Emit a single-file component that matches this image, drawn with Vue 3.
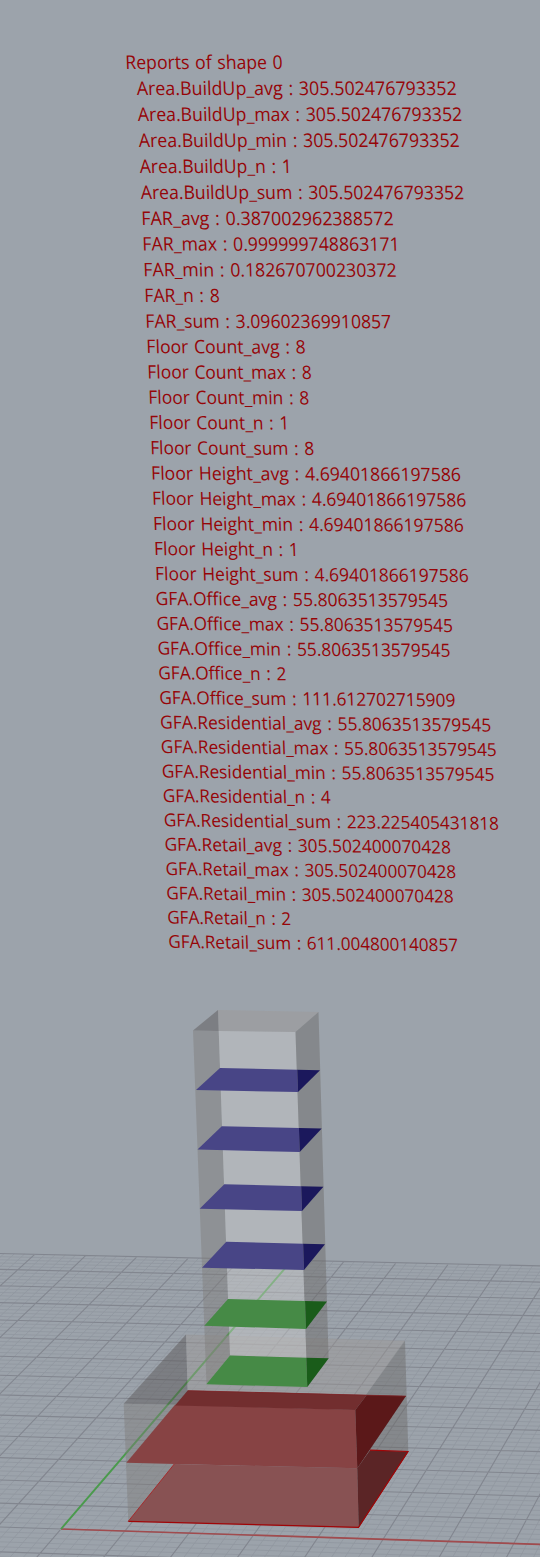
<script setup>
// Ground plane control points: grid (u, v) -> canvas (x, y)
const control = [
  [0, 0, 61, 1529],
  [6, 0, 448.3, 1541.4],
  [-5, 14, 34.7, 1254.3],
  [4, 14, 501, 1265],
]

function solveProjection(points) {
  const m = []
  for (const [u, v, x, y] of points) {
    m.push([u, v, 1, 0, 0, 0, -u * x, -v * x, x])
    m.push([0, 0, 0, u, v, 1, -u * y, -v * y, y])
  }
  for (let c = 0; c < 8; c++) {
    let p = c
    for (let r = c + 1; r < 8; r++) if (Math.abs(m[r][c]) > Math.abs(m[p][c])) p = r
    ;[m[c], m[p]] = [m[p], m[c]]
    for (let r = 0; r < 8; r++) {
      if (r === c) continue
      const f = m[r][c] / m[c][c]
      for (let k = c; k < 9; k++) m[r][k] -= f * m[c][k]
    }
  }
  return m.map((row, i) => row[8] / row[i])
}

const h = solveProjection(control)
function project(u, v) {
  const w = h[6] * u + h[7] * v + 1
  return [(h[0] * u + h[1] * v + h[2]) / w, (h[3] * u + h[4] * v + h[5]) / w]
}
function segment(a, b) {
  return 'M' + project(...a).map((n) => n.toFixed(2)).join(' ') + 'L' + project(...b).map((n) => n.toFixed(2)).join(' ')
}

let major = ''
let minor = ''
for (let i = -60; i <= 75; i++) {
  const d = segment([i / 5, -2], [i / 5, 14])
  if (i % 5 === 0) major += d
  else minor += d
}
for (let i = -10; i <= 70; i++) {
  const d = segment([-12, i / 5], [15, i / 5])
  if (i % 5 === 0) major += d
  else minor += d
}
const axisX = segment([0, 0], [15, 0])
const axisY = segment([0, 0], [0, 14])

// label, ink left, baseline, ink right
const lines = [
  ['Reports of shape 0', 126.5, 69, 282],
  ['Area.BuildUp_avg : 305.502476793352', 137, 95, 456],
  ['Area.BuildUp_max : 305.502476793352', 138, 121, 461.5],
  ['Area.BuildUp_min : 305.502476793352', 139, 147, 459],
  ['Area.BuildUp_n : 1', 140, 173, 289],
  ['Area.BuildUp_sum : 305.502476793352', 141, 199, 463.5],
  ['FAR_avg : 0.387002962388572', 142.5, 225, 393],
  ['FAR_max : 0.999999748863171', 143.5, 250.5, 397],
  ['FAR_min : 0.182670700230372', 144.5, 276.3, 396],
  ['FAR_n : 8', 145.5, 302, 219],
  ['FAR_sum : 3.09602369910857', 146.5, 327.7, 390.5],
  ['Floor Count_avg : 8', 147.5, 353.1, 305],
  ['Floor Count_max : 8', 148.5, 378.5, 311],
  ['Floor Count_min : 8', 149.5, 403.8, 308.5],
  ['Floor Count_n : 1', 150.5, 429, 286.5],
  ['Floor Count_sum : 8', 151.3, 454.3, 313.5],
  ['Floor Height_avg : 4.69401866197586', 152.2, 479.6, 460.3],
  ['Floor Height_max : 4.69401866197586', 153.2, 504.8, 465.7],
  ['Floor Height_min : 4.69401866197586', 154.2, 530.1, 463],
  ['Floor Height_n : 1', 155.2, 555.1, 296],
  ['Floor Height_sum : 4.69401866197586', 156.2, 580.1, 468],
  ['GFA.Office_avg : 55.8063513579545', 156.2, 605, 447.3],
  ['GFA.Office_max : 55.8063513579545', 157.2, 629.8, 452.3],
  ['GFA.Office_min : 55.8063513579545', 158.2, 654.6, 449.8],
  ['GFA.Office_n : 2', 159, 679.2, 285.7],
  ['GFA.Office_sum : 111.612702715909', 160, 704, 454.7],
  ['GFA.Residential_avg : 55.8063513579545', 160.8, 728.6, 490.5],
  ['GFA.Residential_max : 55.8063513579545', 161.6, 753, 496],
  ['GFA.Residential_min : 55.8063513579545', 162.5, 777.6, 493.7],
  ['GFA.Residential_n : 4', 163.4, 802, 330],
  ['GFA.Residential_sum : 223.225405431818', 164.4, 826.3, 498.3],
  ['GFA.Retail_avg : 305.502400070428', 165.2, 850.5, 450.3],
  ['GFA.Retail_max : 305.502400070428', 166.2, 874.9, 455.5],
  ['GFA.Retail_min : 305.502400070428', 167, 899.3, 453],
  ['GFA.Retail_n : 2', 168, 923.5, 290.3],
  ['GFA.Retail_sum : 611.004800140857', 169, 947.8, 457.3],
]
const bearing = { R: 0.9, A: 0, F: 0.9, G: 0.5 }
const report = lines.map(([text, x0, y, x1]) => {
  const b = bearing[text[0]]
  const tail = text.endsWith('1') ? 3 : 0.9
  const t = (y - 69) / 879
  const tilt = Math.max(0, (y - 160) / 790) * 0.0125
  return {
    text,
    size: (19 - t * 1.25).toFixed(2),
    length: (x1 - x0 + b + tail).toFixed(1),
    matrix: `matrix(1 ${tilt.toFixed(5)} 0.035 1 ${(x0 - b).toFixed(2)} ${y})`,
  }
})

// Tower plates: front-left, back-left, back-right, front-right
const plates = [
  ['office', [196, 1090], [220, 1068], [320, 1070.2], [298, 1092]],
  ['office', [197.5, 1149.5], [221.8, 1126.2], [321.7, 1128.5], [299.7, 1152]],
  ['office', [199.7, 1208.8], [224.3, 1184.2], [323.4, 1186.7], [302, 1211]],
  ['office', [202, 1267.7], [226.3, 1241.8], [325, 1244.2], [304, 1270]],
  ['housing', [204.3, 1325.8], [228, 1299], [327, 1301.4], [306, 1329]],
  ['housing', [206.3, 1384.3], [230, 1355.4], [328.7, 1358.2], [307.3, 1387]],
].map(([kind, fl, bl, br, fr]) => {
  const edgeX = fr[0] - (fr[1] - br[1]) * 0.034
  const split = [edgeX, br[1] - 0.4]
  return { kind, front: [fl, bl, split, fr].join(' '), side: [split, br, fr].join(' ') }
})
</script>

<template>
  <main class="viewport">
    <svg class="scene" width="540" height="1557" viewBox="0 0 540 1557">
      <path class="grid-minor" :d="minor" />
      <path class="grid-major" :d="major" />
      <path class="axis-x" :d="axisX" />
      <path class="axis-y" :d="axisY" />

      <!-- podium volume -->
      <g class="glass">
        <polygon class="inner" points="186,1334.5 188,1405 123.7,1403.7" />
        <polygon class="roof" points="186,1334.5 405,1340.7 355.3,1410 188,1405" />
        <polygon class="left" points="123.7,1403.7 188,1405 189.3,1446 128.3,1521.3" />
        <polygon class="right" points="355.3,1410 405,1340.7 408.3,1451.7 358.7,1527.7" />
      </g>
      <polygon class="low-front" points="128.3,1521.3 174.3,1464 357.3,1468.3 358.7,1527.7" />
      <polygon class="low-side" points="357.3,1468.3 370,1450.2 408.3,1451.7 358.7,1527.7" />
      <path class="low-edge" d="M370 1450.2L408 1451.5L358.5 1527.3L128.3 1521.3" />
      <path class="low-edge thin" d="M128.3 1521.3L174.3 1464" />
      <polygon class="mid-front" points="126.3,1462.8 175,1404.8 355.3,1409.8 357.3,1468.3" />
      <polygon class="mid-back" points="187.7,1390.4 366.7,1395 355.3,1410 175,1405.5" />
      <polygon class="mid-side" points="355.3,1410 366.7,1395 406,1396 357.3,1468.3" />
      <path class="mid-edge" d="M187.7 1390.7L406 1396.2" />

      <!-- tower volume -->
      <g class="glass">
        <polygon class="inner" points="218,1010 218.7,1031 193,1030.5" />
        <polygon class="roof" points="218,1010 318.5,1012 295.5,1032 218.7,1031" />
        <polygon class="left" points="193,1030.5 218.7,1031 230,1355.5 206.5,1384" />
        <polygon class="center" points="218.7,1031 295.5,1032 306.5,1358 230,1355.5" />
        <polygon class="right" points="295.5,1032 318.5,1012 328.6,1358.5 307.3,1386.5" />
      </g>
      <g v-for="(p, i) in plates" :key="i" :class="p.kind">
        <polygon class="plate-front" :points="p.front" />
        <polygon class="plate-side" :points="p.side" />
      </g>

      <g class="report">
        <text
          v-for="l in report"
          :key="l.text"
          :transform="l.matrix"
          :font-size="l.size"
          :textLength="l.length"
          lengthAdjust="spacingAndGlyphs"
        >{{ l.text }}</text>
      </g>
    </svg>
  </main>
</template>

<style scoped>
.viewport {
  width: 540px;
  height: 1557px;
  overflow: hidden;
  background: #9ca3ab;
}
.scene {
  display: block;
}
.grid-minor,
.grid-major,
.axis-x,
.axis-y,
.low-edge,
.mid-edge {
  fill: none;
}
.grid-minor {
  stroke: #90979f;
  stroke-width: 0.8;
}
.grid-major {
  stroke: #82868f;
  stroke-width: 1.1;
}
.axis-x {
  stroke: #a14b4e;
  stroke-width: 1.7;
}
.axis-y {
  stroke: #4a9b4c;
  stroke-width: 1.9;
}
.glass {
  fill-opacity: 0.45;
}
.inner {
  fill: #575352;
}
.roof {
  fill: #9e9a97;
}
.left {
  fill: #7f7d7a;
}
.center {
  fill: #cdcbcc;
}
.right {
  fill: #6b6966;
}
.low-front {
  fill: #885253;
}
.low-side {
  fill: #5b2526;
}
.low-edge {
  stroke: #a00507;
  stroke-width: 1.2;
}
.low-edge.thin {
  stroke: #a52b2d;
  stroke-width: 1;
}
.mid-front {
  fill: #874344;
}
.mid-back {
  fill: #722e2f;
}
.mid-side {
  fill: #5b1819;
}
.mid-edge {
  stroke: #7d2224;
  stroke-width: 0.8;
}
.office .plate-front {
  fill: #484586;
}
.office .plate-side {
  fill: #1b185c;
}
.housing .plate-front {
  fill: #468a46;
}
.housing .plate-side {
  fill: #1a5c1a;
}
.report {
  fill: #960508;
  font-family: "Open Sans", "Noto Sans", sans-serif;
  word-spacing: 1.2px;
}
</style>

<style>
body {
  background: #9ca3ab;
}
</style>
